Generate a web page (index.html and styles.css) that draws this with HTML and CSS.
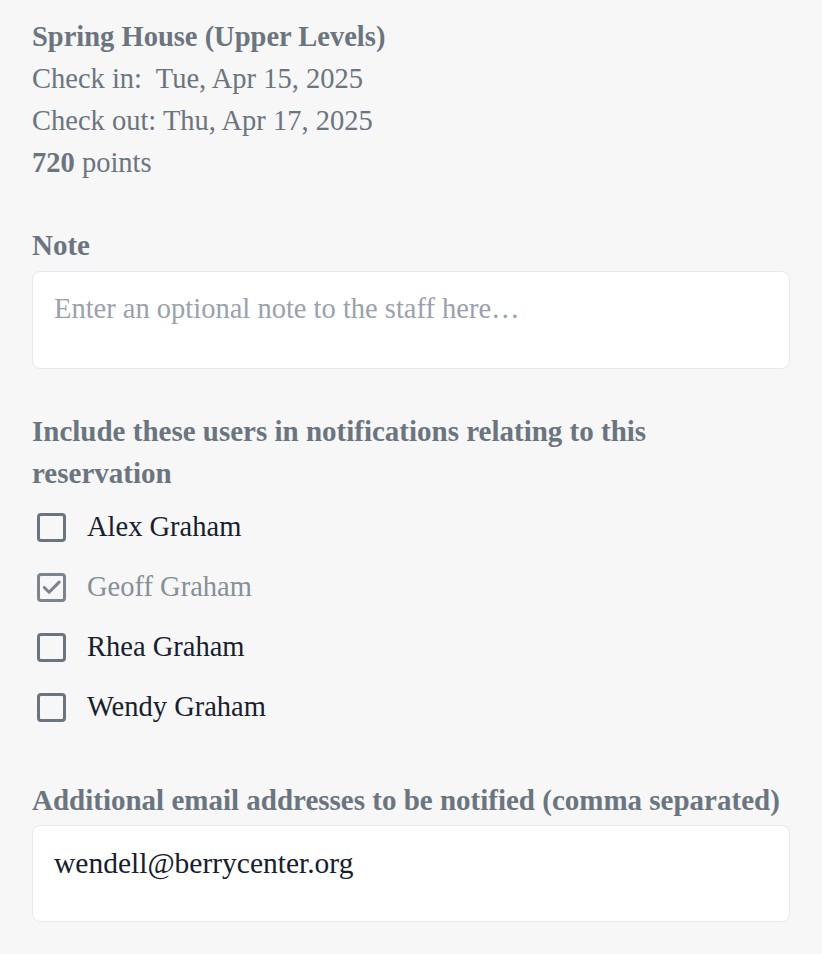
FILE: index.html
```html
<!DOCTYPE html>
<html>
<head>
<meta charset="utf-8">
<link rel="stylesheet" href="styles.css">
</head>
<body>
<div class="page">
  <section class="summary">
    <div class="title">Spring House (Upper Levels)</div>
    <div class="line">Check in:&nbsp; Tue, Apr 15, 2025</div>
    <div class="line">Check out: Thu, Apr 17, 2025</div>
    <div class="line"><strong>720</strong> points</div>
  </section>

  <section class="field note-field">
    <label class="label">Note</label>
    <div class="box"><span class="placeholder">Enter an optional note to the staff here…</span></div>
  </section>

  <section class="field users-field">
    <div class="label users-label">Include these users in notifications relating to this reservation</div>
    <ul class="checks">
      <li class="check"><span class="cb"></span><span class="name">Alex Graham</span></li>
      <li class="check disabled"><span class="cb"><svg viewBox="0 0 24 24" width="24" height="24"><path d="M4.5 12.5l5 5L20 7" fill="none" stroke="currentColor" stroke-width="3.2" stroke-linecap="round" stroke-linejoin="round"/></svg></span><span class="name">Geoff Graham</span></li>
      <li class="check"><span class="cb"></span><span class="name">Rhea Graham</span></li>
      <li class="check"><span class="cb"></span><span class="name">Wendy Graham</span></li>
    </ul>
  </section>

  <section class="field email-field">
    <label class="label">Additional email addresses to be notified (comma separated)</label>
    <div class="box"><span class="value">wendell@berrycenter.org</span></div>
  </section>
</div>
</body>
</html>
```

FILE: styles.css
```css
html, body {
  margin: 0;
  padding: 0;
  background: #f7f7f7;
}
body {
  font-family: "Liberation Serif", "DejaVu Serif", serif;
  font-size: 28.5px;
  line-height: 42px;
  color: #6b7580;
}
.page {
  padding: 16px 32px 0 32px;
  width: 758px;
}
.title {
  font-weight: bold;
}
.summary strong {
  font-weight: bold;
}
.field {
  display: flex;
  flex-direction: column;
}
.note-field {
  margin-top: 40px;
}
.label {
  font-weight: bold;
  font-size: 29px;
  color: #6b7580;
}
.box {
  margin-top: 5px;
  background: #fff;
  border: 1.5px solid #e8e9ee;
  border-radius: 8px;
  height: 98px;
  box-sizing: border-box;
  padding: 16px 21px;
}
.placeholder {
  color: #9aa1ad;
}
.value {
  color: #17202e;
  font-size: 29.5px;
}
.users-field {
  margin-top: 41px;
}
.users-label {
  max-width: 680px;
}
.checks {
  list-style: none;
  margin: 3px 0 0 0;
  padding: 0;
}
.check {
  display: flex;
  align-items: center;
  height: 60px;
  color: #17202e;
}
.cb {
  width: 29px;
  height: 29px;
  box-sizing: border-box;
  border: 3px solid #6b7580;
  border-radius: 4px;
  margin-left: 5px;
  margin-right: 21px;
  display: flex;
  align-items: center;
  justify-content: center;
  color: #6b7580;
}
.check.disabled .name {
  color: #878f99;
}
.check.disabled .cb {
  border-color: #7c848e;
  color: #7c848e;
}
.email-field {
  margin-top: 42px;
}
.email-field .box {
  margin-top: 4px;
  height: 97px;
}
```
